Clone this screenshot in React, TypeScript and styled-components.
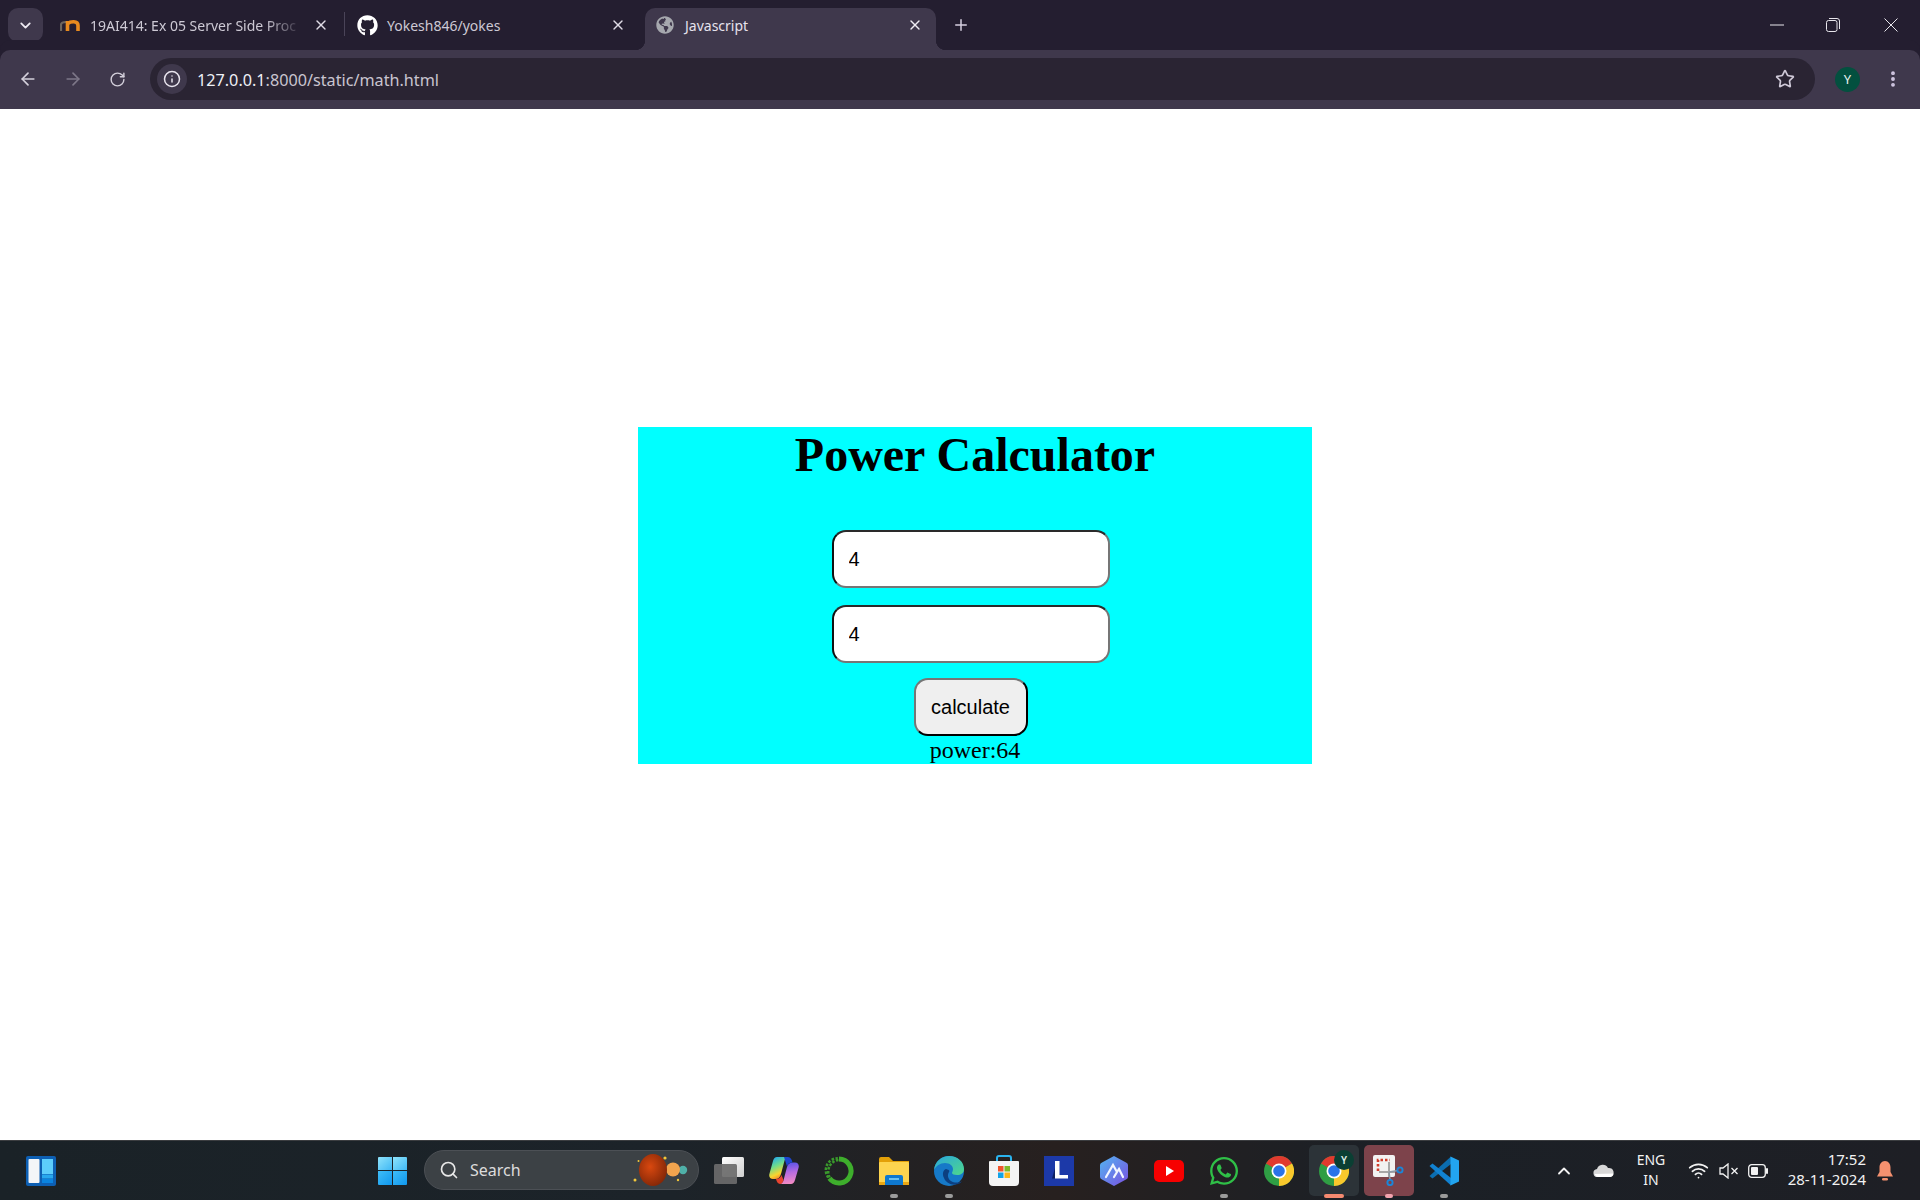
import { createGlobalStyle, styled } from "styled-components";
import { ReactNode } from "react";
import { ArrowLeft, ArrowRight, ChevronDown, ChevronUp, EllipsisVertical, Info, Plus, RotateCw, Search, Star, Wifi, X } from "lucide-react";
import { FaGithub, FaGlobeAmericas, FaWhatsapp } from "react-icons/fa";

const GlobalStyle = createGlobalStyle`
  html, body {
    margin: 0;
    padding: 0;
    background: #fff;
  }
  body {
    font-family: "Noto Sans", "Liberation Sans", sans-serif;
  }
`;

const Screen = styled.div`
  width: 1920px;
  height: 1200px;
  display: flex;
  flex-direction: column;
  overflow: hidden;
`;

/* ---- browser chrome ---- */

const TabStrip = styled.div`
  height: 50px;
  flex: none;
  display: flex;
  align-items: flex-end;
  padding-left: 8px;
  background: #241e30;
`;

const TabSearchButton = styled.div`
  width: 35px;
  height: 34px;
  margin: 0 7px 8px 0;
  border-radius: 10px;
  display: flex;
  align-items: center;
  justify-content: center;
  background: #3f384c;
  color: #eeeaf2;
`;

const Tab = styled.div<{ $active?: boolean; $width: number; $left: number; $right: number; $gap: number }>`
  position: relative;
  width: ${(p) => p.$width}px;
  height: 42px;
  flex: none;
  box-sizing: border-box;
  display: flex;
  align-items: center;
  gap: ${(p) => p.$gap}px;
  padding: 0 ${(p) => p.$right}px 8px ${(p) => p.$left}px;
  border-radius: 10px 10px 0 0;
  background: ${(p) => (p.$active ? "#3f384c" : "transparent")};
  color: ${(p) => (p.$active ? "#e6e2ec" : "#cdc9d4")};
  font-size: 14px;

  ${(p) =>
    p.$active &&
    `
    margin-left: 5px;
    &::before, &::after {
      content: "";
      position: absolute;
      bottom: 0;
      width: 10px;
      height: 10px;
    }
    &::before {
      left: -10px;
      background: radial-gradient(circle at 0 0, transparent 10px, #3f384c 10.5px);
    }
    &::after {
      right: -10px;
      background: radial-gradient(circle at 100% 0, transparent 10px, #3f384c 10.5px);
    }
  `}
`;

const TabTitle = styled.span<{ $fade?: boolean }>`
  flex: 1;
  min-width: 0;
  white-space: nowrap;
  ${(p) =>
    p.$fade &&
    `
    -webkit-mask-image: linear-gradient(to right, #000 82%, transparent 100%);
    mask-image: linear-gradient(to right, #000 82%, transparent 100%);
  `}
`;

const TabDivider = styled.div`
  width: 1px;
  height: 24px;
  margin-bottom: 14px;
  flex: none;
  background: #4a4458;
`;

const NewTab = styled.div`
  width: 50px;
  height: 42px;
  padding-bottom: 8px;
  box-sizing: border-box;
  display: flex;
  align-items: center;
  justify-content: center;
  color: #d6d0e0;
`;

const WindowControls = styled.div`
  margin-left: auto;
  align-self: stretch;
  display: flex;
`;

const WindowButton = styled.div<{ $width: number }>`
  width: ${(p) => p.$width}px;
  display: flex;
  align-items: center;
  justify-content: center;
  padding-bottom: 1px;
  color: #e8e6ec;
`;

const Toolbar = styled.div`
  height: 59px;
  flex: none;
  box-sizing: border-box;
  display: flex;
  align-items: center;
  padding: 0 0 1px 5px;
  border-radius: 10px 10px 0 0;
  background: #3f384c;
  box-shadow: 0 -10px 0 #241e30;
`;

const NavButton = styled.div<{ $dim?: boolean }>`
  width: 45px;
  height: 40px;
  flex: none;
  display: flex;
  align-items: center;
  justify-content: center;
  color: ${(p) => (p.$dim ? "#7d7788" : "#d3cfda")};
`;

const AddressBar = styled.div`
  width: 1665px;
  height: 42px;
  margin-left: 10px;
  flex: none;
  box-sizing: border-box;
  display: flex;
  align-items: center;
  padding: 0 20px 0 7px;
  border-radius: 21px;
  background: #2a2433;
`;

const SiteInfo = styled.div`
  width: 30px;
  height: 30px;
  flex: none;
  border-radius: 50%;
  display: flex;
  align-items: center;
  justify-content: center;
  background: #3f384c;
  color: #e8e4ee;
`;

const Url = styled.div`
  flex: 1;
  margin-left: 10px;
  padding-top: 1px;
  font-size: 16.2px;
  color: #c9c5d0;
  span {
    color: #eef0f6;
  }
`;

const Avatar = styled.div`
  width: 25px;
  height: 25px;
  margin-left: 20px;
  flex: none;
  border-radius: 50%;
  display: flex;
  align-items: center;
  justify-content: center;
  background: #03503f;
  color: #e8f2ee;
  font-size: 13px;
`;

const MenuButton = styled.div`
  width: 24px;
  margin-left: 21px;
  display: flex;
  justify-content: center;
  color: #d3c9e4;
`;

/* ---- page ---- */

const Page = styled.main`
  flex: 1;
  display: flex;
  justify-content: center;
  align-items: flex-start;
  padding: 318px 0 0 30px;
  background: #fff;
`;

const Card = styled.div`
  width: 674px;
  height: 337px;
  display: flex;
  flex-direction: column;
  align-items: center;
  background: #00ffff;
  font-family: "Liberation Serif", "Times New Roman", serif;
  color: #000;
`;

const Title = styled.h1`
  margin: 0 0 48px;
  font-size: 48px;
  font-weight: bold;
  line-height: 55px;
`;

const Form = styled.form`
  display: flex;
  flex-direction: column;
  align-items: center;
  gap: 17px;
  margin-right: 9px;
`;

const NumberInput = styled.input`
  width: 278px;
  height: 58px;
  box-sizing: border-box;
  padding: 0 15px;
  border-width: 2px;
  border-style: solid;
  border-color: #2a2a2a #767676 #767676 #111;
  border-radius: 14px;
  outline: none;
  background: #fff;
  color: #000;
  font-family: "Liberation Sans", Arial, sans-serif;
  font-size: 20px;
`;

const CalcButton = styled.button`
  width: 114px;
  height: 58px;
  margin-top: -2px;
  box-sizing: border-box;
  padding: 0;
  border-width: 2px;
  border-style: solid;
  border-color: #767676 #000 #000 #767676;
  border-radius: 14px;
  background: #efefef;
  color: #000;
  font-family: "Liberation Sans", Arial, sans-serif;
  font-size: 20px;
`;

const Result = styled.div`
  margin-top: 1px;
  font-size: 24px;
  line-height: 27px;
`;

/* ---- taskbar ---- */

const Taskbar = styled.footer`
  height: 60px;
  flex: none;
  box-sizing: border-box;
  display: flex;
  border-top: 1px solid #3b3d40;
  background: linear-gradient(90deg, #1a2227 0%, #1c2329 35%, #27201f 55%, #1b2026 72%, #1e1f25 100%);
  color: #f2f2f2;
`;

const WidgetSlot = styled.div`
  width: 365px;
  flex: none;
  display: flex;
  align-items: center;
  padding-left: 26px;
  box-sizing: border-box;
`;

const TaskCell = styled.div<{ $highlight?: string }>`
  position: relative;
  width: 55px;
  flex: none;
  display: flex;
  align-items: center;
  justify-content: center;
  ${(p) =>
    p.$highlight &&
    `
    &::before {
      content: "";
      position: absolute;
      left: 3px;
      right: 2px;
      top: 4px;
      bottom: 4px;
      border-radius: 5px;
      background: ${p.$highlight};
    }
  `}
  svg {
    position: relative;
  }
`;

const RunningDot = styled.span<{ $width: number; $color: string }>`
  position: absolute;
  left: 50%;
  bottom: 2px;
  width: ${(p) => p.$width}px;
  height: 4px;
  transform: translateX(-50%);
  border-radius: 2px;
  background: ${(p) => p.$color};
`;

const AvatarBadge = styled.span`
  position: absolute;
  top: 9px;
  left: 28px;
  width: 20px;
  height: 20px;
  border-radius: 50%;
  display: flex;
  align-items: center;
  justify-content: center;
  background: #0a3f33;
  color: #dfeee9;
  font-size: 10px;
  font-weight: 600;
`;

const SearchBox = styled.div`
  width: 275px;
  height: 40px;
  margin: 9px 2px 0 4px;
  flex: none;
  box-sizing: border-box;
  display: flex;
  align-items: center;
  gap: 11px;
  padding: 0 9px 0 14px;
  border: 1px solid #4c5055;
  border-radius: 20px;
  background: #3c4145;
  color: #dcdcdc;
  font-size: 16px;
`;

const SearchLabel = styled.span`
  flex: 1;
`;

const Tray = styled.div`
  margin-left: auto;
  display: flex;
  padding-right: 16px;
`;

const TrayItem = styled.div<{ $width: number }>`
  width: ${(p) => p.$width}px;
  flex: none;
  display: flex;
  align-items: center;
  justify-content: center;
`;

const LangBlock = styled.div`
  width: 58px;
  flex: none;
  display: flex;
  flex-direction: column;
  align-items: center;
  justify-content: center;
  padding-bottom: 2px;
  font-size: 14px;
  line-height: 20px;
`;

const Clock = styled.div`
  width: 90px;
  flex: none;
  display: flex;
  flex-direction: column;
  align-items: flex-end;
  justify-content: center;
  padding-bottom: 4px;
  font-size: 15px;
  line-height: 20px;
`;

/* ---- drawn logos ---- */

function MoodleMark() {
  return (
    <svg width="20" height="12" viewBox="0 0 20 12" fill="none">
      <path d="M1 12V6c0-2 2-3 5-3" stroke="#6b655f" strokeWidth="2.2" />
      <path d="M7.500 12V2" stroke="#e88a1e" strokeWidth="3.600" />
      <path d="M8 4.500c2-2 10-3.500 10 2V12" stroke="#e88a1e" strokeWidth="3.600" />
    </svg>
  );
}

function WidgetsIcon() {
  return (
    <svg width="30" height="30" viewBox="0 0 30 30">
      <rect width="30" height="30" rx="2" fill="#0d5fb3" />
      <rect x="2.500" y="3" width="11" height="24" rx="1" fill="#f4f6f8" />
      <rect x="16" y="3" width="11" height="15" fill="#5dcdfb" />
      <rect x="16" y="18.500" width="11" height="4" fill="#28a8ee" />
      <rect x="16" y="23" width="11" height="4" fill="#0a84e0" />
    </svg>
  );
}

function StartIcon() {
  return (
    <svg width="29" height="29" viewBox="0 0 29 29">
      <defs>
        <linearGradient id="startTop" x1="0" y1="0" x2="1" y2="1">
          <stop offset="0" stopColor="#8fe3fb" />
          <stop offset="1" stopColor="#3fb8f5" />
        </linearGradient>
        <linearGradient id="startBottom" x1="0" y1="0" x2="1" y2="1">
          <stop offset="0" stopColor="#3fbdf7" />
          <stop offset="1" stopColor="#0f97ee" />
        </linearGradient>
      </defs>
      <path d="M1 1h13v13H0V2a1 1 0 0 1 1-1z" fill="url(#startTop)" />
      <path d="M15 1h13a1 1 0 0 1 1 1v12H15z" fill="url(#startTop)" />
      <path d="M0 15h14v14H1a1 1 0 0 1-1-1z" fill="url(#startBottom)" />
      <path d="M15 15h14v13a1 1 0 0 1-1 1H15z" fill="url(#startBottom)" />
    </svg>
  );
}

function Planets() {
  return (
    <svg width="56" height="34" viewBox="0 0 56 34">
      <defs>
        <radialGradient id="marsFill" cx="0.4" cy="0.4" r="0.7">
          <stop offset="0" stopColor="#d9480f" />
          <stop offset="1" stopColor="#7c2406" />
        </radialGradient>
      </defs>
      <circle cx="50" cy="17" r="4.200" fill="#4fb0a8" />
      <circle cx="40" cy="16.500" r="7" fill="#f2a44e" />
      <ellipse cx="20" cy="17" rx="14" ry="16" fill="url(#marsFill)" />
      <circle cx="2" cy="27" r="1.500" fill="#f3c83a" />
      <circle cx="5.500" cy="8" r="1" fill="#f3c83a" />
      <circle cx="32" cy="5" r="1.600" fill="#f3c83a" />
      <circle cx="45" cy="27" r="1.200" fill="#f3c83a" />
    </svg>
  );
}

function TaskViewIcon() {
  return (
    <svg width="30" height="30" viewBox="0 0 30 30">
      <defs>
        <linearGradient id="tvFront" x1="0" y1="0" x2="1" y2="1">
          <stop offset="0" stopColor="#ffffff" />
          <stop offset="1" stopColor="#cfcfcf" />
        </linearGradient>
      </defs>
      <rect x="8" y="1" width="22" height="20" rx="1.500" fill="url(#tvFront)" />
      <rect x="0" y="8" width="23" height="20" rx="1.500" fill="#6b6b6b" fillOpacity="0.92" />
    </svg>
  );
}

function CopilotIcon() {
  return (
    <svg width="30" height="30" viewBox="0 0 30 30">
      <defs>
        <linearGradient id="copLeft" x1="0.2" y1="0" x2="0.6" y2="1">
          <stop offset="0" stopColor="#1fa9f2" />
          <stop offset="0.4" stopColor="#6fdc8c" />
          <stop offset="0.75" stopColor="#f8d52e" />
          <stop offset="1" stopColor="#f4762a" />
        </linearGradient>
        <linearGradient id="copRight" x1="0.5" y1="0" x2="0.6" y2="1">
          <stop offset="0" stopColor="#5a54e8" />
          <stop offset="0.45" stopColor="#b66be0" />
          <stop offset="1" stopColor="#f58cc2" />
        </linearGradient>
      </defs>
      <path d="M8 1h11c-2 .5-3 2-3.600 4L12 18c-.8 3-2.500 5-6 5H4c-3 0-4.500-2.500-3.500-5.500L4 5c.8-2.500 2-4 4-4z" fill="url(#copLeft)" />
      <path d="M22 28H11c2-.5 3-2 3.600-4L18 11c.8-3 2.500-4.500 6-4.500h2c3 0 4.500 2.500 3.500 5.500L26 24c-.8 2.500-2 4-4 4z" fill="url(#copRight)" />
      <path d="M15 1h4c2.500 0 4 2.500 4.500 5.500-3 0-4.800 1.500-5.500 4z" fill="#1c46cf" />
      <path d="M7 23c3 0 4.500-1.500 5.500-4l2 5c-.5 2-1.700 4-3.500 4-2 0-3.500-2.500-4-5z" fill="#e8432f" />
    </svg>
  );
}

function RingIcon() {
  return (
    <svg width="30" height="30" viewBox="0 0 30 30" fill="none">
      <path d="M15 3a12 12 0 1 1-9.500 19.300" stroke="#3eae2c" strokeWidth="5" />
      <path d="M5.500 22.300A12 12 0 0 1 15 3" stroke="#3a9a2c" strokeWidth="2.500" strokeDasharray="2.500 1.500" transform="translate(-1.200 -.8)" />
      <path d="M5.500 22.300A12 12 0 0 1 15 3" stroke="#3a9a2c" strokeWidth="2.500" strokeDasharray="2.500 1.500" strokeDashoffset="2" transform="translate(1.200 .8)" />
    </svg>
  );
}

function FolderIcon() {
  return (
    <svg width="30" height="28" viewBox="0 0 30 28">
      <path d="M0 2a2 2 0 0 1 2-2h8l4 4h16v4H0z" fill="#e3a008" />
      <rect y="5" width="30" height="23" rx="1" fill="#fdd44f" />
      <rect y="25" width="30" height="3" fill="#eaa613" />
      <path d="M6 20a2 2 0 0 1 2-2h14a2 2 0 0 1 2 2v8H6z" fill="#0e78cf" />
      <rect x="10" y="21" width="10" height="2" fill="#69c0f2" />
    </svg>
  );
}

function EdgeIcon() {
  return (
    <svg width="30" height="30" viewBox="0 0 30 30">
      <defs>
        <linearGradient id="edgeTop" x1="0" y1="0" x2="1" y2="1">
          <stop offset="0" stopColor="#2aa7dc" />
          <stop offset="1" stopColor="#4fd88a" />
        </linearGradient>
      </defs>
      <circle cx="15" cy="15" r="15" fill="#1679c8" />
      <path d="M0 14C1 5 8 0 15 0c9 0 15 6 15 13 0 4-3 6-7 6-3 0-5-1-5-2 0-1 1-2 1-4 0-3-3-6-8-6-5 0-9 3-11 7z" fill="url(#edgeTop)" />
      <path d="M12 13c-3 1-4 5-2 9 2 5 8 8 14 6 2-.5 3-1.500 4-3-3 2-8 2-11 0-3-2-4-6-2-9 .5-1 1-2-3-3z" fill="#0c3f80" />
    </svg>
  );
}

function StoreIcon() {
  return (
    <svg width="30" height="31" viewBox="0 0 30 31">
      <path d="M8 6V3a2 2 0 0 1 2-2h10a2 2 0 0 1 2 2v3" fill="none" stroke="#2ab3ee" strokeWidth="2" />
      <path d="M1 6h28a1 1 0 0 1 1 1v20a4 4 0 0 1-4 4H4a4 4 0 0 1-4-4V7a1 1 0 0 1 1-1z" fill="#f4f4f4" />
      <rect x="9" y="11" width="5.500" height="5.500" fill="#f0552d" />
      <rect x="15.500" y="11" width="5.500" height="5.500" fill="#7fba2a" />
      <rect x="9" y="17.500" width="5.500" height="5.500" fill="#12a3e8" />
      <rect x="15.500" y="17.500" width="5.500" height="5.500" fill="#fbb71a" />
    </svg>
  );
}

function LAppIcon() {
  return (
    <svg width="30" height="30" viewBox="0 0 30 30">
      <rect width="30" height="30" fill="#1c39a8" />
      <path d="M11 12v10.500H8z" fill="#0e2060" />
      <path d="M11 5h4.500v14H24v3.500H11z" fill="#ffffff" />
    </svg>
  );
}

function HexAppIcon() {
  return (
    <svg width="28" height="30" viewBox="0 0 28 30" fill="none">
      <defs>
        <linearGradient id="hexFill" x1="0" y1="0" x2="1" y2="1">
          <stop offset="0" stopColor="#52b5f2" />
          <stop offset="1" stopColor="#7a4fe0" />
        </linearGradient>
      </defs>
      <path d="M14 0l12 6.500a3 3 0 0 1 2 3v11a3 3 0 0 1-2 3L14 30 2 23.500a3 3 0 0 1-2-3v-11a3 3 0 0 1 2-3z" fill="url(#hexFill)" />
      <path d="M6 21L13 9l4 7M14 21l3-5 2-3 4 8" stroke="#f2f6ff" strokeWidth="2.200" strokeLinecap="round" />
    </svg>
  );
}

function YoutubeIcon() {
  return (
    <svg width="30" height="22" viewBox="0 0 30 22">
      <rect width="30" height="22" rx="5" fill="#f70000" />
      <path d="M12 6l8 5-8 5z" fill="#fff" />
    </svg>
  );
}

function ChromeIcon({ size }: { size: number }) {
  return (
    <svg width={size} height={size} viewBox="0 0 30 30">
      <circle cx="15" cy="15" r="15" fill="#2f9e44" />
      <path d="M15 15L2 7.500A15 15 0 0 1 28 7.500z" fill="#e03a2e" />
      <path d="M15 15L28 7.500A15 15 0 0 1 15 30z" fill="#f9c82c" />
      <circle cx="15" cy="15" r="7.500" fill="#fff" />
      <circle cx="15" cy="15" r="5.800" fill="#2a73e8" />
    </svg>
  );
}

function SnipIcon() {
  return (
    <svg width="31" height="31" viewBox="0 0 31 31" fill="none">
      <rect x="0" y="0" width="22" height="22" rx="2" fill="#f2f2f2" />
      <path d="M5 16V5h12" stroke="#d13c2b" strokeWidth="2.600" strokeDasharray="2.500 2" />
      <path d="M16 7v15M6 17h16" stroke="#a8a8a8" strokeWidth="2" />
      <path d="M16 17l9-1.500M16 17l1 8" stroke="#8f9aa5" strokeWidth="1.600" />
      <circle cx="27" cy="15" r="2.600" stroke="#1a86d9" strokeWidth="1.900" />
      <circle cx="17" cy="27.500" r="2.600" stroke="#1a86d9" strokeWidth="1.900" />
    </svg>
  );
}

function VscodeIcon() {
  return (
    <svg width="30" height="30" viewBox="0 0 30 30">
      <path d="M22 .5V8L3.500 22.500.500 20z" fill="#0b6db0" />
      <path d="M.500 10l3-2.500L22 22v7.500z" fill="#1182d2" />
      <path d="M21.500 .5L30 4.500v21l-8.500 4z" fill="#22a5f0" />
    </svg>
  );
}

function CloudIcon() {
  return (
    <svg width="21" height="13" viewBox="0 0 21 13">
      <path d="M5 13a4 4 0 0 1-1-8 6 6 0 0 1 11-1 4.500 4.500 0 0 1 2 9z" fill="#d8d8d8" />
      <path d="M1.500 10c1 2 2 3 3.500 3h12c2 0 3.500-1.500 3.500-3.500z" fill="#ffffff" />
    </svg>
  );
}

function MutedIcon() {
  return (
    <svg width="20" height="16" viewBox="0 0 20 16" fill="none" stroke="#f2f2f2" strokeWidth="1.300">
      <path d="M1 5h3l5-4v14l-5-4H1z" />
      <path d="M12.500 5l6 6M18.500 5l-6 6" />
    </svg>
  );
}

function BatteryIcon() {
  return (
    <svg width="21" height="14" viewBox="0 0 21 14" fill="none">
      <rect x="0.700" y="0.700" width="16.600" height="12.600" rx="3" stroke="#f2f2f2" strokeWidth="1.300" />
      <rect x="3" y="3" width="7" height="8" rx="1" fill="#f2f2f2" />
      <path d="M19 5v4" stroke="#f2f2f2" strokeWidth="2" strokeLinecap="round" />
    </svg>
  );
}

function BellIcon() {
  return (
    <svg width="16" height="20" viewBox="0 0 16 20">
      <path d="M8 0c3.500 0 5.500 3 5.500 6.500V11l2.500 4.500H0L2.500 11V6.500C2.500 3 4.500 0 8 0z" fill="#f5916f" />
      <rect x="5" y="17" width="6" height="2.500" rx="1.200" fill="#f5916f" />
    </svg>
  );
}

function RestoreIcon() {
  return (
    <svg width="14" height="14" viewBox="0 0 14 14" fill="none" stroke="currentColor">
      <rect x="0.500" y="2.500" width="10.500" height="11" rx="2" />
      <path d="M3 .5h8a2.500 2.500 0 0 1 2.500 2.500v8" />
    </svg>
  );
}

function MinimizeIcon() {
  return (
    <svg width="14" height="2" viewBox="0 0 14 2">
      <path d="M0 1h14" stroke="currentColor" />
    </svg>
  );
}

function CloseIcon() {
  return (
    <svg width="14" height="14" viewBox="0 0 14 14">
      <path d="M.5 .5l13 13M13.500 .5l-13 13" stroke="currentColor" />
    </svg>
  );
}

interface TaskItem {
  key: string;
  icon: ReactNode;
  dot?: { width: number; color: string };
  highlight?: string;
  badge?: string;
}

const taskItems: TaskItem[] = [
  { key: "taskview", icon: <TaskViewIcon /> },
  { key: "copilot", icon: <CopilotIcon /> },
  { key: "ring", icon: <RingIcon /> },
  { key: "files", icon: <FolderIcon />, dot: { width: 8, color: "#9b9b9b" } },
  { key: "edge", icon: <EdgeIcon />, dot: { width: 8, color: "#9b9b9b" } },
  { key: "store", icon: <StoreIcon /> },
  { key: "lapp", icon: <LAppIcon /> },
  { key: "hex", icon: <HexAppIcon /> },
  { key: "youtube", icon: <YoutubeIcon /> },
  { key: "whatsapp", icon: <FaWhatsapp size={32} color="#2fbf47" />, dot: { width: 8, color: "#9b9b9b" } },
  { key: "chrome", icon: <ChromeIcon size={30} /> },
  { key: "chrome-active", icon: <ChromeIcon size={30} />, highlight: "#2c3338", dot: { width: 20, color: "#f58a70" }, badge: "Y" },
  { key: "snip", icon: <SnipIcon />, highlight: "#7d434b", dot: { width: 8, color: "#f3a3ae" } },
  { key: "vscode", icon: <VscodeIcon />, dot: { width: 8, color: "#9b9b9b" } },
];

export default function App() {
  return (
    <Screen>
      <GlobalStyle />
      <TabStrip>
        <TabSearchButton>
          <ChevronDown size={17} strokeWidth={2.5} />
        </TabSearchButton>
        <Tab $width={294} $left={10} $right={15} $gap={10}>
          <MoodleMark />
          <TabTitle $fade>19AI414: Ex 05 Server Side Proc</TabTitle>
          <X size={16} strokeWidth={2} color="#e0dce6" />
        </Tab>
        <TabDivider />
        <Tab $width={295} $left={12} $right={14} $gap={9}>
          <FaGithub size={21} color="#fff" />
          <TabTitle>Yokesh846/yokes</TabTitle>
          <X size={16} strokeWidth={2} color="#e0dce6" />
        </Tab>
        <Tab $active $width={291} $left={11} $right={13} $gap={11}>
          <FaGlobeAmericas size={18} color="#a6a8ae" />
          <TabTitle>Javascript</TabTitle>
          <X size={16} strokeWidth={2} color="#f0edf4" />
        </Tab>
        <NewTab>
          <Plus size={18} strokeWidth={2} />
        </NewTab>
        <WindowControls>
          <WindowButton $width={56}>
            <MinimizeIcon />
          </WindowButton>
          <WindowButton $width={56}>
            <RestoreIcon />
          </WindowButton>
          <WindowButton $width={59}>
            <CloseIcon />
          </WindowButton>
        </WindowControls>
      </TabStrip>

      <Toolbar>
        <NavButton>
          <ArrowLeft size={20} strokeWidth={2} />
        </NavButton>
        <NavButton $dim>
          <ArrowRight size={20} strokeWidth={2} />
        </NavButton>
        <NavButton>
          <RotateCw size={17} strokeWidth={2} />
        </NavButton>
        <AddressBar>
          <SiteInfo>
            <Info size={18} strokeWidth={2} />
          </SiteInfo>
          <Url>
            <span>127.0.0.1</span>:8000/static/math.html
          </Url>
          <Star size={20} strokeWidth={2} color="#cfc9d8" />
        </AddressBar>
        <Avatar>Y</Avatar>
        <MenuButton>
          <EllipsisVertical size={20} strokeWidth={2.6} />
        </MenuButton>
      </Toolbar>

      <Page>
        <Card>
          <Title>Power Calculator</Title>
          <Form>
            <NumberInput type="text" value="4" readOnly />
            <NumberInput type="text" value="4" readOnly />
            <CalcButton type="button">calculate</CalcButton>
          </Form>
          <Result>power:64</Result>
        </Card>
      </Page>

      <Taskbar>
        <WidgetSlot>
          <WidgetsIcon />
        </WidgetSlot>
        <TaskCell>
          <StartIcon />
        </TaskCell>
        <SearchBox>
          <Search size={20} strokeWidth={2} color="#e8e8e8" />
          <SearchLabel>Search</SearchLabel>
          <Planets />
        </SearchBox>
        {taskItems.map((item) => (
          <TaskCell key={item.key} $highlight={item.highlight}>
            {item.icon}
            {item.badge && <AvatarBadge>{item.badge}</AvatarBadge>}
            {item.dot && <RunningDot $width={item.dot.width} $color={item.dot.color} />}
          </TaskCell>
        ))}
        <Tray>
          <TrayItem $width={41}>
            <ChevronUp size={20} strokeWidth={2.2} />
          </TrayItem>
          <TrayItem $width={38}>
            <CloudIcon />
          </TrayItem>
          <LangBlock>
            <span>ENG</span>
            <span>IN</span>
          </LangBlock>
          <TrayItem $width={36}>
            <Wifi size={21} strokeWidth={2} />
          </TrayItem>
          <TrayItem $width={25}>
            <MutedIcon />
          </TrayItem>
          <TrayItem $width={35}>
            <BatteryIcon />
          </TrayItem>
          <Clock>
            <span>17:52</span>
            <span>28-11-2024</span>
          </Clock>
          <TrayItem $width={38}>
            <BellIcon />
          </TrayItem>
        </Tray>
      </Taskbar>
    </Screen>
  );
}
